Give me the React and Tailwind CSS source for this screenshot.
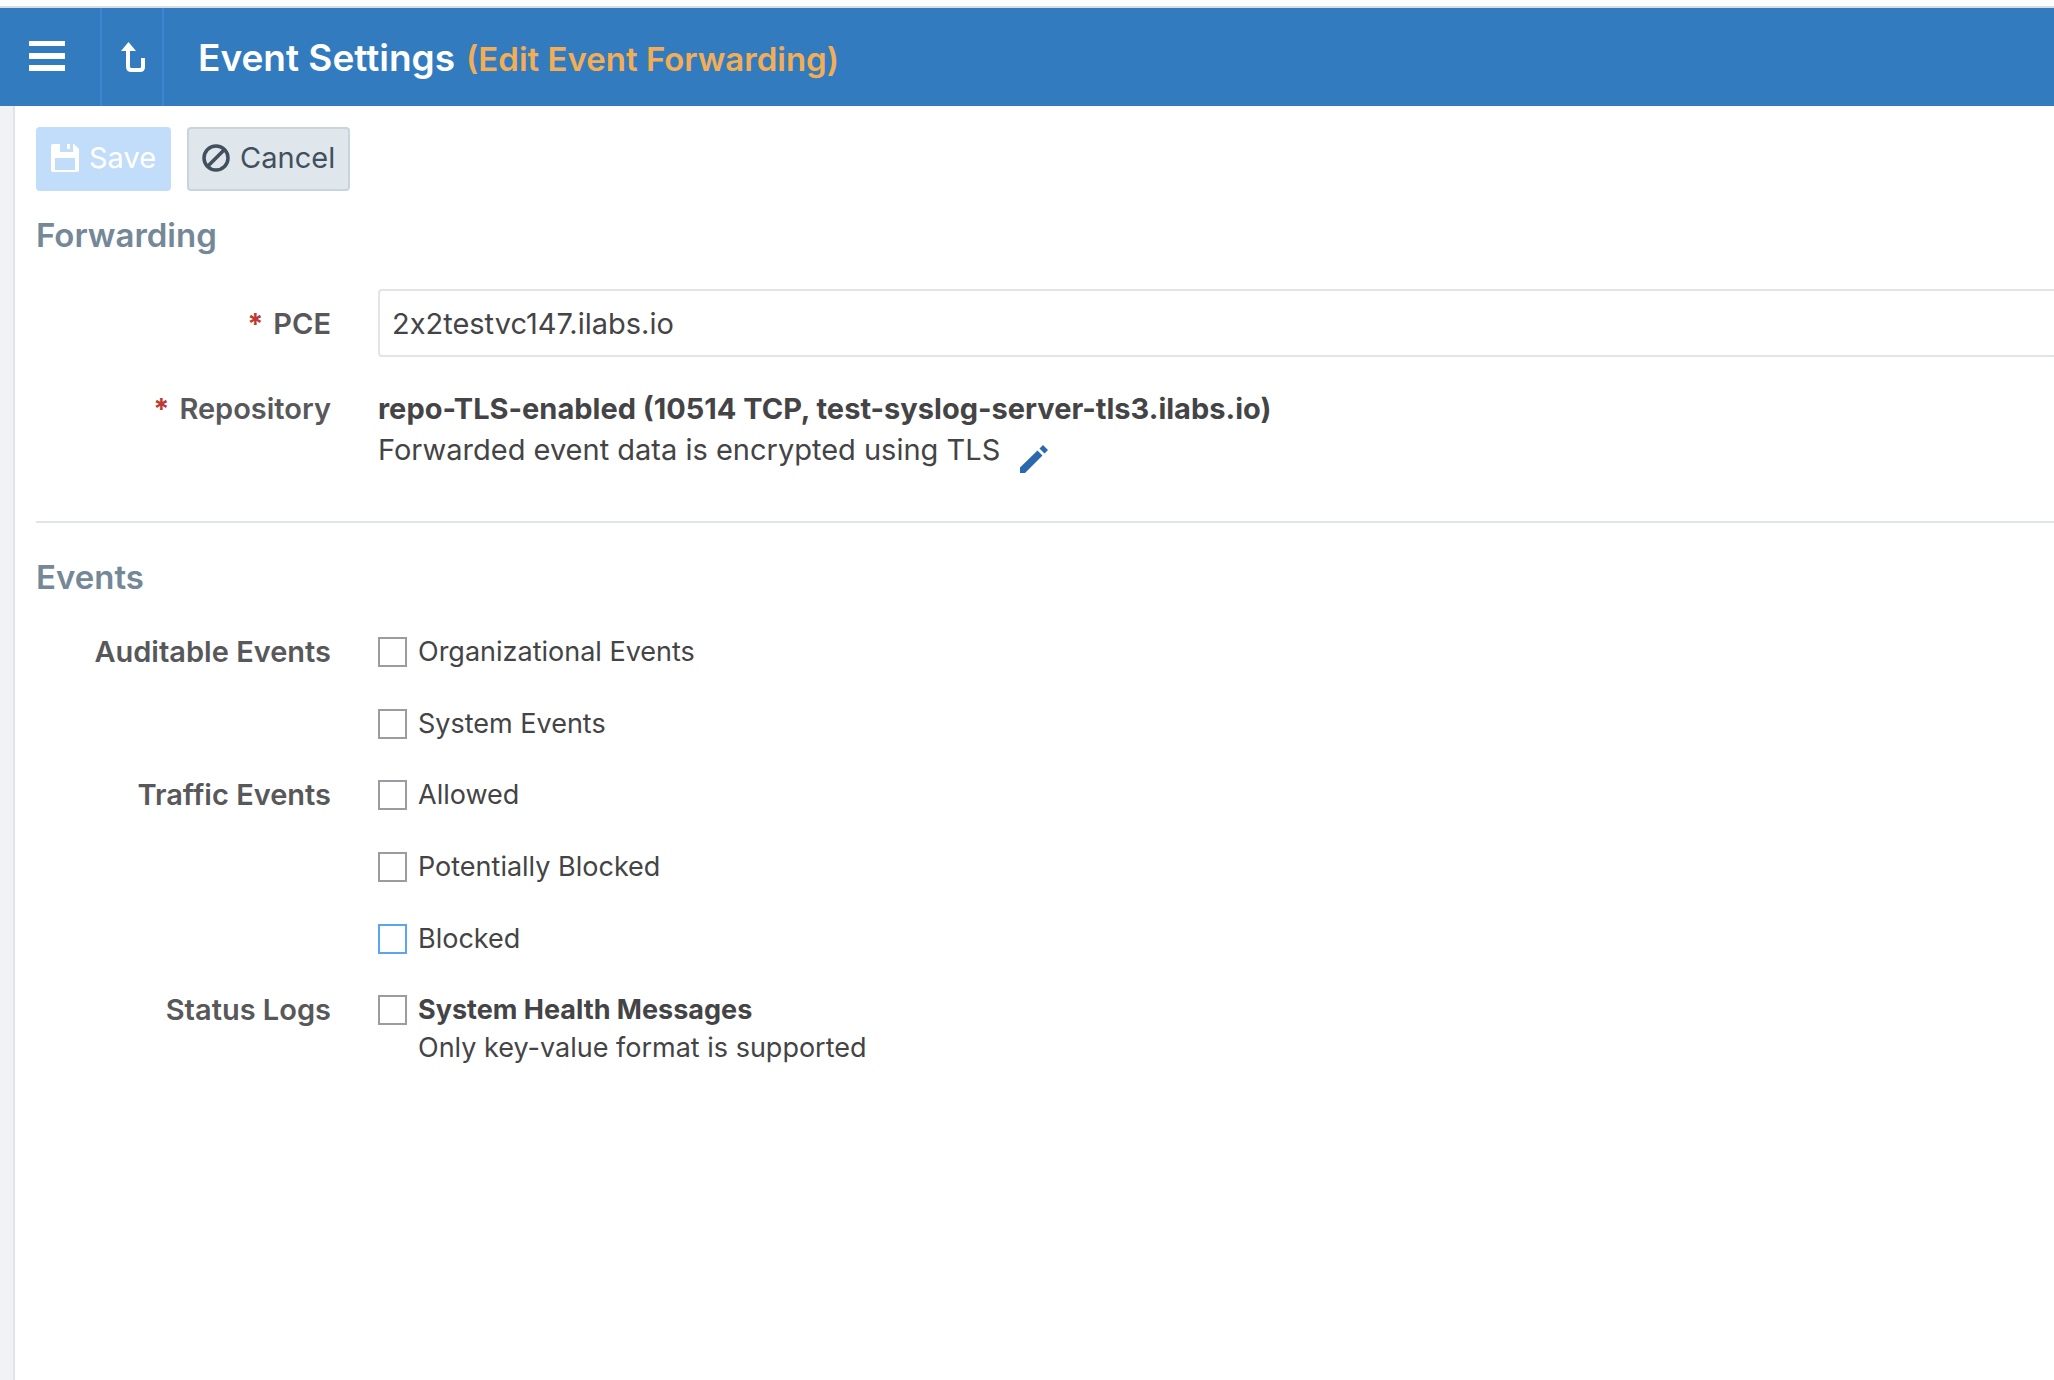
import { useState } from "react";

const eventGroups = [
  {
    title: "Auditable Events",
    options: [
      { id: "organizational", label: "Organizational Events" },
      { id: "system", label: "System Events" },
    ],
  },
  {
    title: "Traffic Events",
    options: [
      { id: "allowed", label: "Allowed" },
      { id: "potentially-blocked", label: "Potentially Blocked" },
      { id: "blocked", label: "Blocked", active: true },
    ],
  },
  {
    title: "Status Logs",
    options: [
      {
        id: "health",
        label: "System Health Messages",
        note: "Only key-value format is supported",
      },
    ],
  },
];

function MenuIcon() {
  return (
    <svg width="36" height="32" viewBox="0 0 36 32" fill="currentColor" aria-hidden="true">
      <path d="M0 1h36v5H0zM0 13h36v6H0zM0 25h36v6H0z" />
    </svg>
  );
}

function UpIcon() {
  return (
    <svg width="24" height="30" viewBox="0 0 24 30" fill="none" aria-hidden="true">
      <path d="M7.5 0 15 9H0z" fill="currentColor" />
      <path d="M7 7v17.5q0 3.500 3.500 3.500h8.500q3 0 3-3V16" stroke="currentColor" strokeWidth="4" />
    </svg>
  );
}

function SaveIcon() {
  return (
    <svg width="28" height="28" viewBox="0 0 28 28" aria-hidden="true">
      <path
        fill="currentColor"
        fillRule="evenodd"
        d="M2 0h7v8h13V0h1l5 5v21a2 2 0 0 1-2 2H2a2 2 0 0 1-2-2V2a2 2 0 0 1 2-2zM4 14v12h20V14zM16 0h3v5h-3z"
      />
    </svg>
  );
}

function CancelIcon() {
  return (
    <svg width="28" height="28" viewBox="0 0 28 28" fill="none" stroke="currentColor" aria-hidden="true">
      <circle cx="14" cy="14" r="12" strokeWidth="3.5" />
      <path d="M5.5 22.5 22.5 5.5" strokeWidth="3.5" />
    </svg>
  );
}

function PencilIcon() {
  return (
    <svg width="28" height="28" viewBox="0 0 28 28" fill="currentColor" aria-hidden="true">
      <path d="M0 22.5 17.5 5.5 22.5 10.5 5 28H0zM19.5 3.5 23 0 28 5 24.5 8.5z" />
    </svg>
  );
}

function FieldLabel({ htmlFor, required, children }) {
  const Tag = htmlFor ? "label" : "div";
  return (
    <Tag
      htmlFor={htmlFor}
      className="w-[295px] shrink-0 text-right text-[29px] leading-[41px] font-semibold text-[#58585b]"
    >
      {required && <span className="mr-[10px] font-bold text-[#bd3b33]">*</span>}
      {children}
    </Tag>
  );
}

function EventOption({ option, checked, onToggle }) {
  return (
    <div className="flex gap-[11px]">
      <input
        id={option.id}
        type="checkbox"
        checked={checked}
        onChange={() => onToggle(option.id)}
        className={`mt-[6px] h-[30px] w-[29px] shrink-0 appearance-none border-2 bg-white checked:bg-[#327bbf] ${
          option.active ? "border-[#5aa4f0]" : "border-[#9d9ba2]"
        }`}
      />
      <div className="text-[27px] leading-[38px] text-[#444446]">
        <label htmlFor={option.id} className={`block pt-[2px] ${option.note ? "font-bold" : ""}`}>
          {option.label}
        </label>
        {option.note && <p>{option.note}</p>}
      </div>
    </div>
  );
}

export default function App() {
  const [pce, setPce] = useState("2x2testvc147.ilabs.io");
  const [selected, setSelected] = useState([]);

  const toggle = (id) =>
    setSelected((prev) => (prev.includes(id) ? prev.filter((x) => x !== id) : [...prev, id]));

  return (
    <div className="flex min-h-screen flex-col bg-white pt-[6px] font-['Inter',sans-serif] text-[#444446]">
      <header className="flex h-[100px] shrink-0 items-stretch border-t-2 border-[#d9dde1] bg-[#327bbf] text-white">
        <button type="button" aria-label="Menu" className="flex w-[102px] items-center border-r-2 border-[#3b85d3] pb-[2px] pl-[29px]">
          <MenuIcon />
        </button>
        <button type="button" aria-label="Go up" className="flex w-[62px] items-center border-r-2 border-[#3b85d3] pl-[19px]">
          <UpIcon />
        </button>
        <h1 className="flex items-baseline gap-[11px] pt-[26px] pl-[34px] text-[37px] leading-[48px] font-semibold">
          Event Settings
          <span className="text-[33px] text-[#f2ae56]">(Edit Event Forwarding)</span>
        </h1>
      </header>

      <div className="flex flex-1">
        <aside className="w-[15px] shrink-0 border-r-2 border-[#dde5ea] bg-[#f1f2f5]" />
        <main className="flex-1 pt-[21px] pl-[21px]">
          <div className="flex gap-4 text-[29px]">
            <button
              type="button"
              disabled
              className="flex h-16 items-center gap-[10px] rounded bg-[#c1ddf9] px-[15px] pb-[2px] text-white"
            >
              <SaveIcon />
              Save
            </button>
            <button
              type="button"
              className="flex h-16 items-center gap-[10px] rounded border-2 border-[#c8d5dc] bg-[#dfe6ec] px-[13px] pb-[2px] text-[#414f5e]"
            >
              <CancelIcon />
              Cancel
            </button>
          </div>

          <section className="border-b-2 border-[#dfe5ea] pb-12">
            <h2 className="pt-5 text-[33px] leading-[48px] font-semibold text-[#748897]">Forwarding</h2>
            <div className="mt-[30px] flex items-center gap-[47px]">
              <FieldLabel htmlFor="pce" required>
                PCE
              </FieldLabel>
              <input
                id="pce"
                type="text"
                value={pce}
                onChange={(e) => setPce(e.target.value)}
                className="h-[68px] min-w-0 flex-1 rounded-l border-2 border-r-0 border-[#e3e3ea] px-3 text-[29px] outline-none [font-feature-settings:'calt'_0]"
              />
            </div>
            <div className="mt-[31px] flex gap-[47px]">
              <FieldLabel required>Repository</FieldLabel>
              <div className="text-[29px] leading-[41px]">
                <p className="font-bold">repo-TLS-enabled (10514 TCP, test-syslog-server-tls3.ilabs.io)</p>
                <p className="flex items-start gap-5">
                  Forwarded event data is encrypted using TLS
                  <button type="button" aria-label="Edit repository" className="pt-4 text-[#2a69ad]">
                    <PencilIcon />
                  </button>
                </p>
              </div>
            </div>
          </section>

          <section>
            <h2 className="pt-[30px] text-[33px] leading-[48px] font-semibold text-[#748897]">Events</h2>
            <div className="mt-[30px] flex flex-col gap-[31px]">
              {eventGroups.map((group) => (
                <div key={group.title} role="group" aria-label={group.title} className="flex gap-[47px]">
                  <FieldLabel>{group.title}</FieldLabel>
                  <div className="flex flex-col gap-8">
                    {group.options.map((option) => (
                      <EventOption
                        key={option.id}
                        option={option}
                        checked={selected.includes(option.id)}
                        onToggle={toggle}
                      />
                    ))}
                  </div>
                </div>
              ))}
            </div>
          </section>
        </main>
      </div>
    </div>
  );
}
